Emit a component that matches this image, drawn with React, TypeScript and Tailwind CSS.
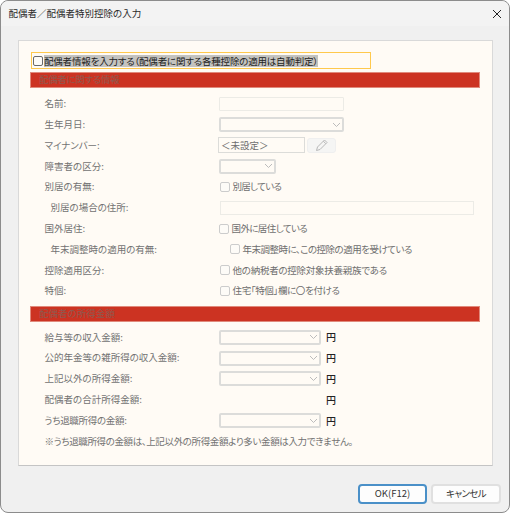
const font = { fontFamily: '"Noto Sans CJK JP", "Noto Sans", sans-serif' };

function Chevron() {
  return (
    <svg width="9" height="6" viewBox="0 0 9 6" fill="none" className="shrink-0">
      <path d="M1 1 L4.5 4.5 L8 1" stroke="#bcbcbc" strokeWidth="1" />
    </svg>
  );
}

function Select({ w }: { w: string }) {
  return (
    <div className={`${w} h-[15px] border-2 border-[#dcdcda] rounded-[2px] bg-[#fffbf5] flex items-center justify-end pr-[1px]`}>
      <Chevron />
    </div>
  );
}

function Check({ label, ml = "", track = "" }: { label: string; ml?: string; track?: string }) {
  return (
    <div className={`flex items-center ${ml}`}>
      <div className="w-[10px] h-[10px] rounded-[2px] border border-[#cccccc] bg-[#fdfbf7] mr-[2.5px] shrink-0" />
      <span className={`text-[#6e6e6e] text-[9.5px] leading-none whitespace-nowrap ${track}`}>{label}</span>
    </div>
  );
}

function Row({ label, indent = false, track = "", children }: { label: string; indent?: boolean; track?: string; children?: React.ReactNode }) {
  return (
    <div className="flex items-center h-[20.8px]">
      <div className={`w-[175px] shrink-0 text-[#727272] text-[9.5px] leading-none whitespace-nowrap ${track} ${indent ? "pl-[6.5px]" : "pl-[0.5px]"}`}>
        {label}
      </div>
      {children}
    </div>
  );
}

function Section({ label, track = "" }: { label: string; track?: string }) {
  return (
    <div className={`h-[16px] bg-[#cc3322] border border-[#e08a7c] flex items-center pl-[8px] text-[#8f5a50] text-[9.5px] leading-none ${track}`}>
      {label}
    </div>
  );
}

function Yen({ label, track = "" }: { label: string; track?: string }) {
  return (
    <Row label={label} track={track}>
      <Select w="w-[102px]" />
      <span className="ml-[5px] text-[#222222] text-[10px] font-medium leading-none">円</span>
    </Row>
  );
}

export default function App() {
  return (
    <div style={font} className="w-[510px] h-[513px] bg-white overflow-hidden [font-feature-settings:'palt']">
      <div className="w-[510px] h-[513px] bg-[#f0f0f0] rounded-[8px] border border-[#8c8c8c] flex flex-col">
        <div className="h-[25px] shrink-0 flex items-center justify-between pl-[7.5px] pr-[7px] rounded-t-[8px] bg-[#f3f3f3]">
          <span className="text-[#2a2a2a] text-[9.5px] leading-none whitespace-nowrap">配偶者／配偶者特別控除の入力</span>
          <svg width="10" height="10" viewBox="0 0 10 10" fill="none">
            <path d="M1 1 L9 9 M9 1 L1 9" stroke="#222222" strokeWidth="1" />
          </svg>
        </div>

        <div className="ml-[17px] mt-[14px] w-[475px] h-[426px] bg-[#fffbf5] border border-[#d9d9d9] border-b-[#c4c4c4] pl-[11px] pr-[12px] pt-[11px] shrink-0">
          <div className="ml-[1px] w-[340px] h-[17px] border border-[#ffc94d] flex items-center pl-[1px]">
            <div className="w-[10px] h-[10px] rounded-[2px] border border-[#6a6a6a] bg-[#fdfbf7] mr-[1px] shrink-0" />
            <span className="bg-[#c4c3bf] text-[#222222] text-[9.5px] leading-[12px] whitespace-nowrap tracking-[-0.19px]">配偶者情報を入力する（配偶者に関する各種控除の適用は自動判定）</span>
          </div>
          <div className="mt-[3px]"><Section label="配偶者に関する情報" track="tracking-[-0.35px]" /></div>
          <div className="pl-[14px] mt-[5.5px]">
            <Row label="名前:">
              <div className="w-[125px] h-[14px] border border-[#ecebe6] rounded-[1px]" />
            </Row>
            <Row label="生年月日:"><Select w="w-[125px]" /></Row>
            <Row label="マイナンバー:">
              <div className="-ml-[1px] w-[87px] h-[16px] border border-[#dcdcd9] flex items-center pl-[2px] text-[#6e6e6e] text-[9.5px] leading-none whitespace-nowrap">＜未設定＞</div>
              <div className="ml-[2px] w-[29px] h-[15px] rounded-[3px] border border-[#efefef] bg-[#f5f5f4] flex items-center justify-center">
                <svg width="14" height="14" viewBox="0 0 14 14" fill="none">
                  <path d="M1.5 12.5 L2.5 9 L9.5 2 L12 4.5 L5 11.5 Z M8.3 3.2 L10.8 5.7" stroke="#b8b8b8" strokeWidth="1" />
                </svg>
              </div>
            </Row>
            <Row label="障害者の区分:"><Select w="w-[57px]" /></Row>
            <Row label="別居の有無:"><Check label="別居している" ml="ml-[1px]" track="tracking-[-0.7px]" /></Row>
            <Row label="別居の場合の住所:" indent>
              <div className="ml-[1px] w-[254px] h-[14px] border border-[#ecebe6]" />
            </Row>
            <Row label="国外居住:"><Check label="国外に居住している" track="tracking-[-0.6px]" /></Row>
            <Row label="年末調整時の適用の有無:" indent><Check label="年末調整時に、この控除の適用を受けている" ml="ml-[11px]" track="tracking-[-0.5px]" /></Row>
            <Row label="控除適用区分:"><Check label="他の納税者の控除対象扶養親族である" ml="ml-[1px]" track="tracking-[-0.25px]" /></Row>
            <Row label="特個:"><Check label="住宅「特個」欄に〇を付ける" ml="ml-[1px]" track="tracking-[-0.35px]" /></Row>
          </div>
          <div className="mt-[4.5px]"><Section label="配偶者の所得金額" /></div>
          <div className="pl-[14px] mt-[5px]">
            <Yen label="給与等の収入金額:" />
            <Yen label="公的年金等の雑所得の収入金額:" />
            <Yen label="上記以外の所得金額:" />
            <Row label="配偶者の合計所得金額:">
              <span className="ml-[107px] text-[#222222] text-[10px] font-medium leading-none">円</span>
            </Row>
            <Yen label="うち退職所得の金額:" track="tracking-[-0.3px]" />
            <div className="h-[20.8px] flex items-center pl-[0.5px] text-[#727272] text-[9.5px] leading-none whitespace-nowrap tracking-[-0.37px]">
              ※うち退職所得の金額は、上記以外の所得金額より多い金額は入力できません。
            </div>
          </div>
        </div>

        <div className="flex justify-end gap-[4px] pr-[8px] mt-[18px]">
          <button className="w-[69px] h-[20px] rounded-[4px] border-2 border-[#4a90c8] bg-[#fdfdfd] text-[#333333] text-[9.5px] leading-none">OK(F12)</button>
          <button className="w-[70px] h-[20px] rounded-[4px] border-2 border-[#e0e0e0] bg-[#fdfdfd] text-[#333333] text-[9.5px] leading-none tracking-[-0.6px]">キャンセル</button>
        </div>
      </div>
    </div>
  );
}
